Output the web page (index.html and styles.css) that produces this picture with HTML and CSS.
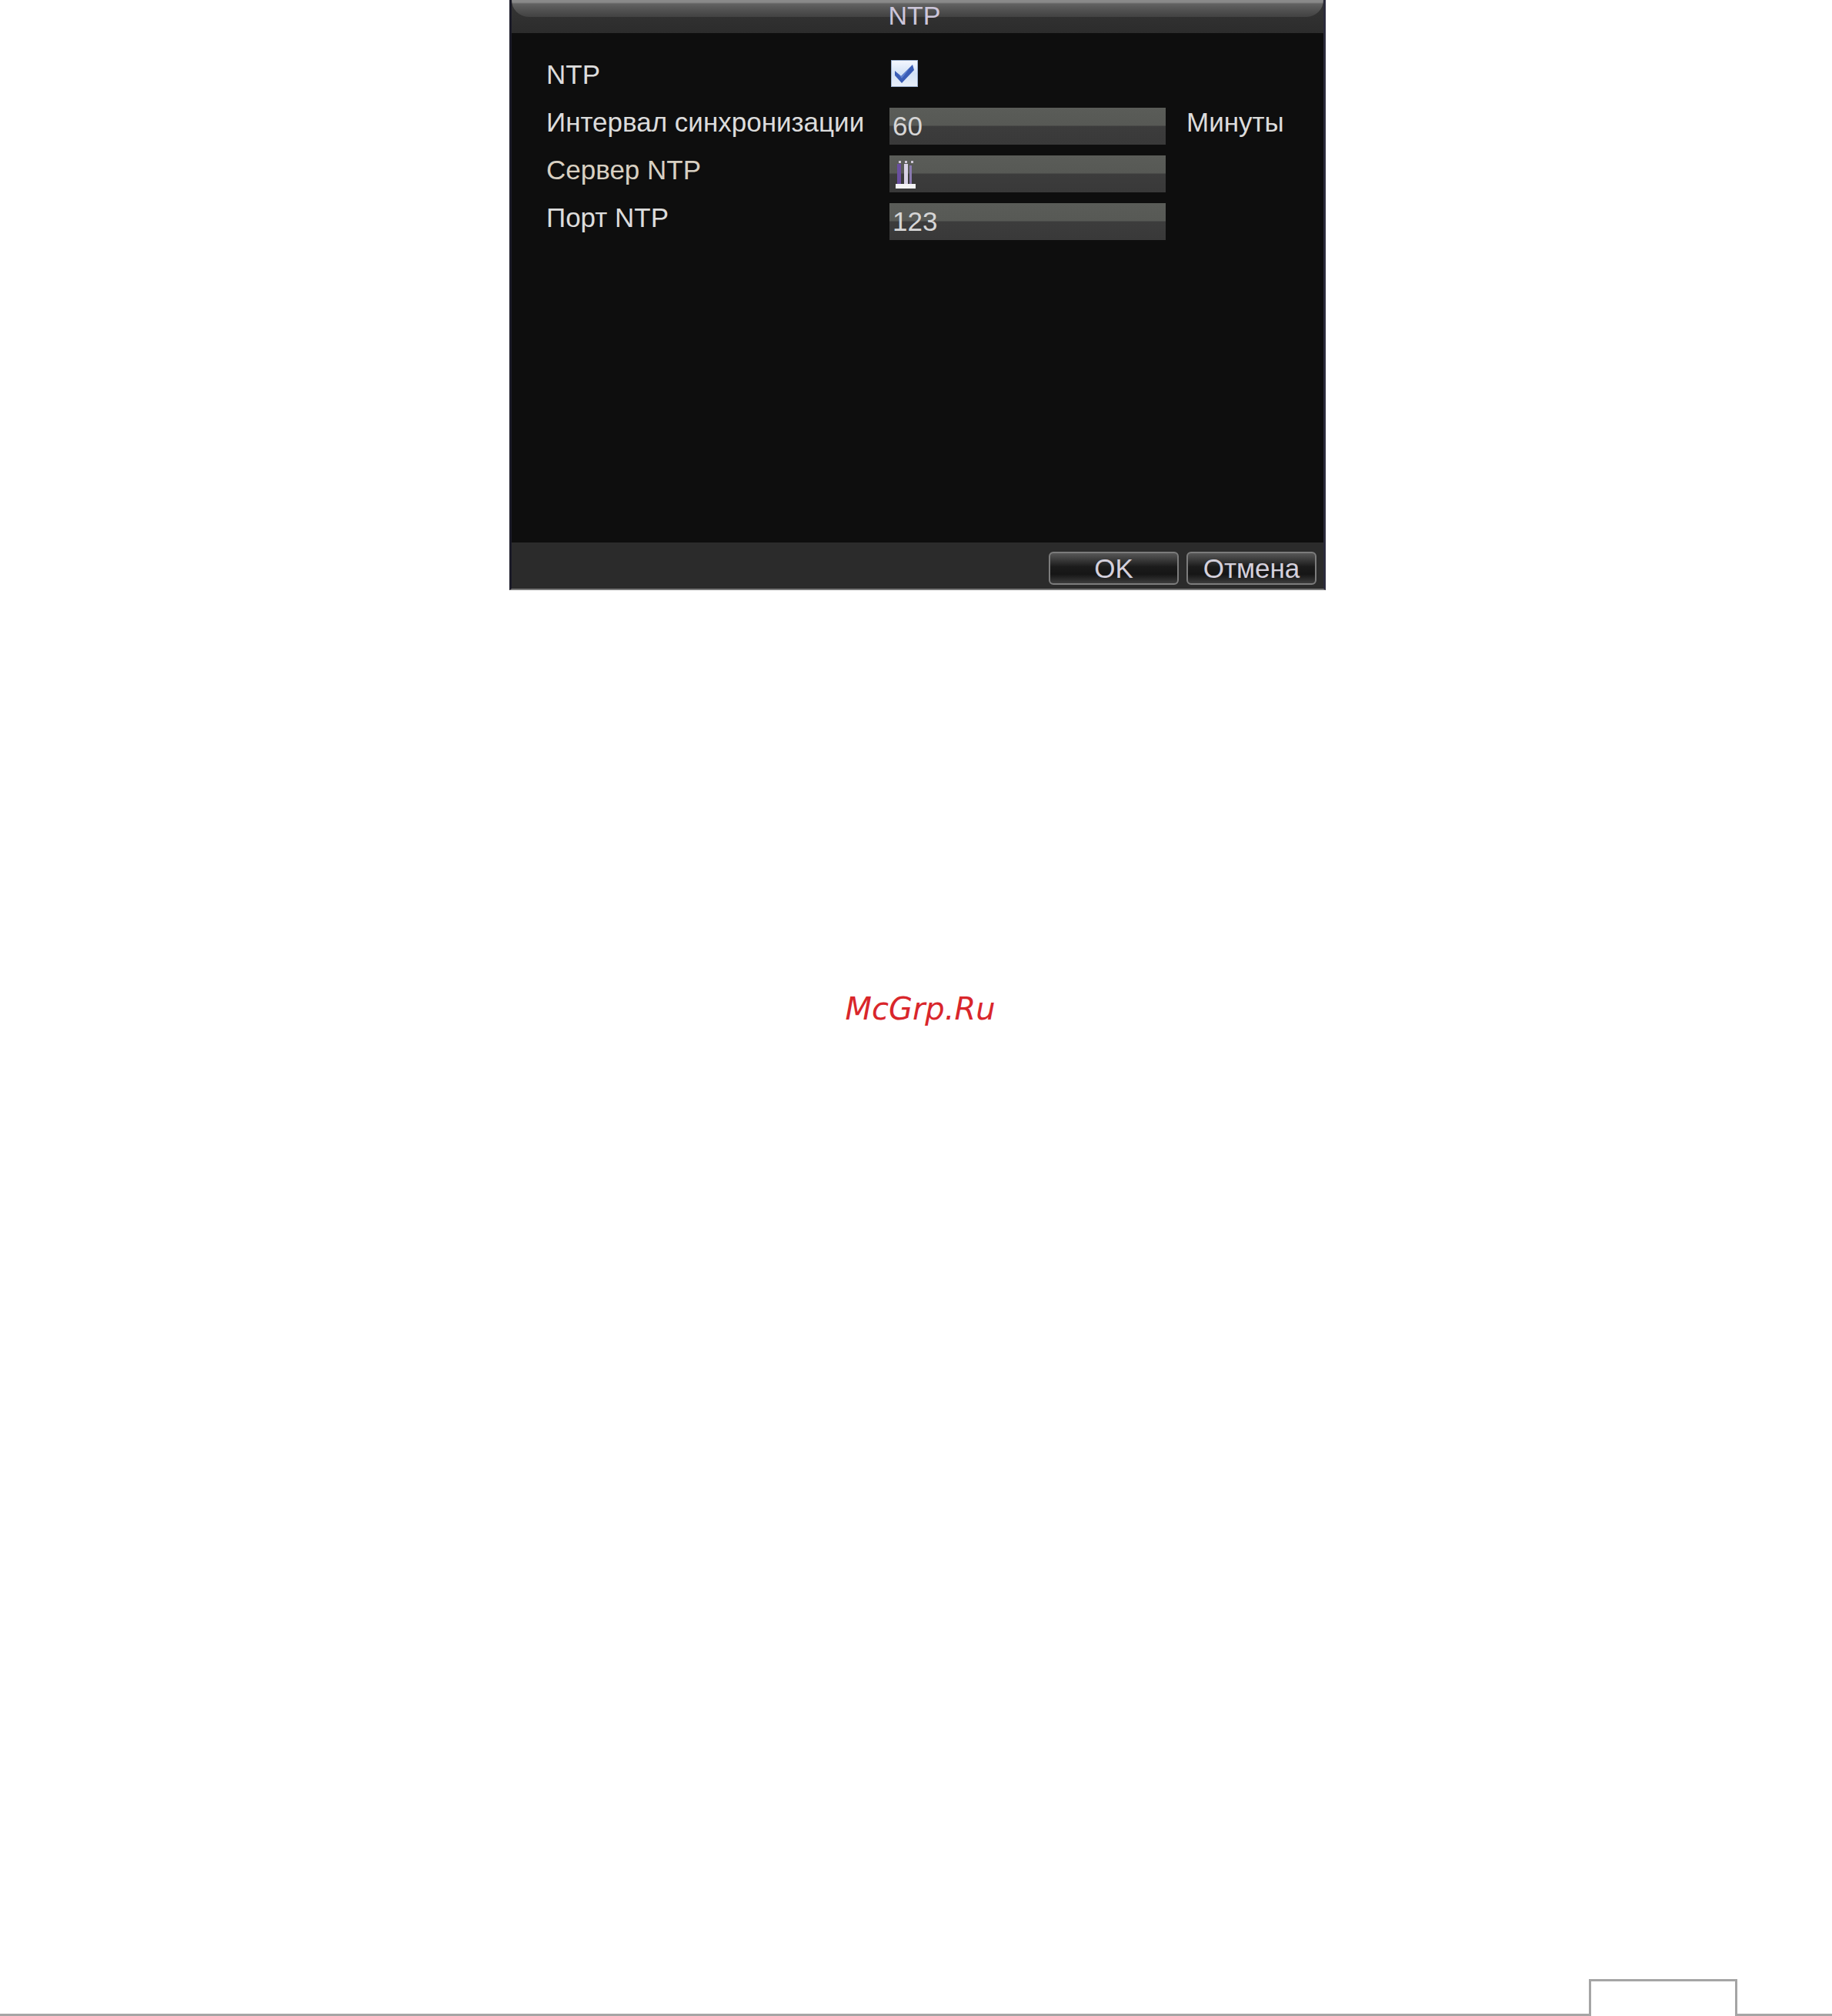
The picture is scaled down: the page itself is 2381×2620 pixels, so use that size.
FILE: index.html
```html
<!DOCTYPE html>
<html lang="ru">
<head>
<meta charset="utf-8">
<title>NTP</title>
<link rel="stylesheet" href="styles.css">
</head>
<body>
<div class="page">
  <section class="dialog">
    <header class="title-bar">
      <div class="title-pill"></div>
      <h1 class="title">NTP</h1>
    </header>
    <div class="dialog-body">
      <div class="form">
        <span class="label">NTP</span>
        <span class="checkbox">
          <svg width="35" height="35" viewBox="0 0 35 35">
            <defs>
              <linearGradient id="cbg" x1="0" y1="0" x2="0" y2="1">
                <stop offset="0" stop-color="#f4f7ff"/>
                <stop offset="0.5" stop-color="#d3e2f6"/>
                <stop offset="1" stop-color="#e8eff9"/>
              </linearGradient>
            </defs>
            <rect x="0.5" y="0.5" width="34" height="34" fill="url(#cbg)" stroke="#9bb0cf"/>
            <path d="M5 14 L13 21 L28 6 L30 13 L14 30 L5 20 Z" fill="#3a5db6"/>
            <path d="M9 17 L13 21 L24 11 L14 24 Z" fill="#5f82cf"/>
          </svg>
        </span>
        <span class="spacer"></span>

        <span class="label">Интервал синхронизации</span>
        <span class="input">60</span>
        <span class="unit">Минуты</span>

        <span class="label label-warm">Сервер NTP</span>
        <span class="input">
          <svg class="caret" width="36" height="40" viewBox="0 0 36 40">
            <rect x="8" y="2" width="3" height="3" fill="#cfc8d8"/>
            <rect x="16" y="2" width="3" height="3" fill="#cfc8d8"/>
            <rect x="24" y="2" width="3" height="3" fill="#cfc8d8"/>
            <rect x="6" y="6" width="5" height="27" fill="#6a4fa0"/>
            <rect x="15" y="6" width="5" height="27" fill="#d8d2e6"/>
            <rect x="22" y="8" width="3" height="24" fill="#8a7ab0"/>
            <rect x="4" y="32" width="26" height="6" fill="#f4f4f4"/>
          </svg>
        </span>
        <span class="spacer"></span>

        <span class="label">Порт NTP</span>
        <span class="input">123</span>
        <span class="spacer"></span>
      </div>
    </div>
    <footer class="dialog-footer">
      <button class="btn" type="button">OK</button>
      <button class="btn" type="button">Отмена</button>
    </footer>
  </section>

  <div class="watermark">McGrp.Ru</div>

  <div class="page-footer">
    <div class="rule"></div>
    <div class="tab"></div>
    <div class="rule rule-right"></div>
  </div>
</div>
</body>
</html>
```
FILE: styles.css
```css
html, body {
  margin: 0;
  padding: 0;
  background: #ffffff;
}

body {
  font-family: "Liberation Sans", Arial, sans-serif;
}

.page {
  height: 2620px;
  display: flex;
  flex-direction: column;
  overflow: hidden;
}

/* ---------- dialog ---------- */
.dialog {
  box-sizing: border-box;
  width: 1061px;
  margin-left: 662px;
  border-left: 3px solid #1b1b28;
  border-right: 3px solid #2b2b3c;
  border-bottom: 2px solid #7a7a7a;
  background: #0e0e0e;
  display: flex;
  flex-direction: column;
}

.title-bar {
  position: relative;
  height: 43px;
  background: linear-gradient(#353535, #2c2c2c);
}

.title-pill {
  height: 22px;
  border-radius: 0 0 26px 26px;
  background: linear-gradient(#8a8a8a 0, #8a8a8a 3px, #626262 5px, #4d4d4d 70%, #424242 100%);
}

.title {
  position: absolute;
  top: 2px;
  left: 0;
  right: 8px;
  margin: 0;
  text-align: center;
  font-size: 34px;
  font-weight: normal;
  line-height: 36px;
  color: #cdc6da;
}

.dialog-body {
  height: 662px;
  box-sizing: border-box;
  padding: 35px 0 0 45px;
  background: #0e0e0e;
}

.form {
  display: grid;
  grid-template-columns: 446px 359px auto;
  grid-template-rows: repeat(4, 48px);
  row-gap: 14px;
}

.label {
  align-self: start;
  font-size: 35px;
  line-height: 38px;
  color: #dcdcdc;
  white-space: nowrap;
}

.label-warm {
  color: #d8d0c2;
}

.checkbox {
  align-self: start;
  width: 35px;
  height: 35px;
  margin-left: 2px;
}

.checkbox svg {
  display: block;
}

.input {
  display: flex;
  align-items: center;
  box-sizing: border-box;
  height: 48px;
  padding: 0 0 0 4px;
  background: linear-gradient(#5a5c58 0, #575955 48%, #3c3c3c 50%, #393939 100%);
  color: #d6d6d6;
  font-size: 35px;
}

.caret {
  display: block;
  margin-top: 2px;
}

.unit {
  align-self: start;
  padding-left: 27px;
  font-size: 35px;
  line-height: 38px;
  color: #dcdcdc;
}

.dialog-footer {
  height: 60px;
  box-sizing: border-box;
  display: flex;
  justify-content: flex-end;
  align-items: flex-start;
  gap: 10px;
  padding: 12px 9px 0 0;
  background: #2b2b2b;
}

.btn {
  box-sizing: border-box;
  width: 169px;
  height: 43px;
  padding: 0;
  border: 2px solid #7c7c7c;
  border-radius: 6px;
  background: linear-gradient(#575757 0, #3a3a3a 22%, #1b1b1b 45%, #161616 70%, #3c3c3c 100%);
  color: #d4d0dc;
  font-family: "Liberation Sans", Arial, sans-serif;
  font-size: 35px;
  line-height: 39px;
}

/* ---------- watermark ---------- */
.watermark {
  margin-top: 520px;
  padding-left: 11px;
  text-align: center;
  font-family: "DejaVu Sans", Verdana, sans-serif;
  font-style: oblique;
  font-size: 40px;
  line-height: 48px;
  color: #d9262b;
}

/* ---------- page footer ---------- */
.page-footer {
  margin-top: auto;
  display: flex;
  align-items: flex-end;
  height: 48px;
}

.rule {
  flex: 1;
  height: 3px;
  background: #a5a5a5;
}

.rule-right {
  flex: 0 0 123px;
}

.tab {
  box-sizing: border-box;
  width: 193px;
  height: 48px;
  border: 3px solid #a5a5a5;
  border-bottom: none;
}
```
